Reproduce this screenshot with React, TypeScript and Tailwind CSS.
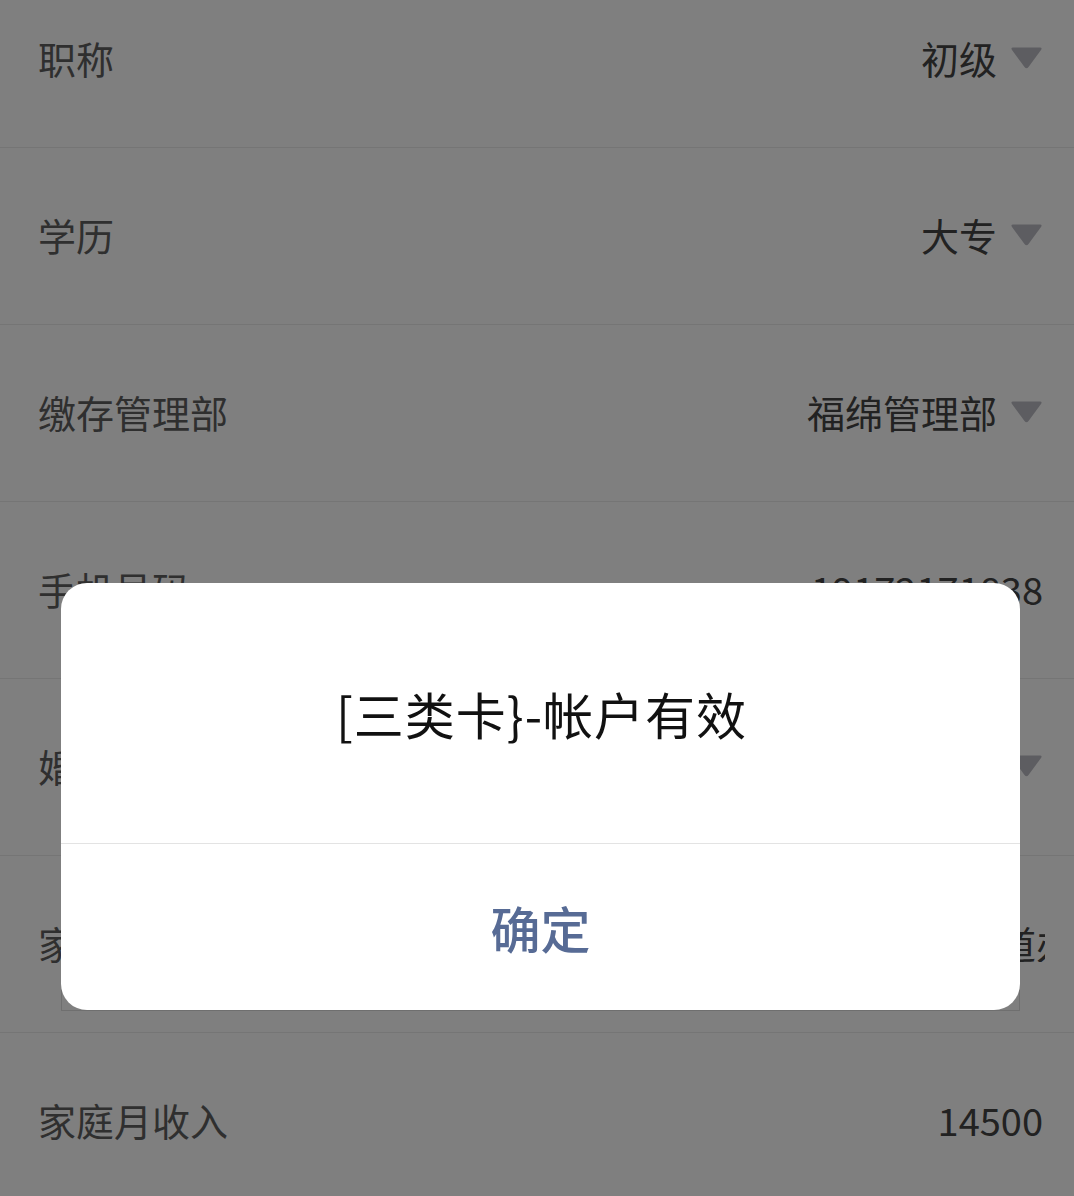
import React from "react";

type Row = {
  label: string;
  value: string;
  select?: boolean;
  clip?: boolean;
};

const rows: Row[] = [
  { label: "职称", value: "初级", select: true },
  { label: "学历", value: "大专", select: true },
  { label: "缴存管理部", value: "福绵管理部", select: true },
  { label: "手机号码", value: "19172171838" },
  { label: "婚姻状况", value: "已婚", select: true },
  { label: "家庭住址", value: "湖北省武汉市洪山区珞喻路街道办事处", clip: true },
  { label: "家庭月收入", value: "14500" },
];

const dialogTitle = "[三类卡}-帐户有效";

function Caret() {
  return (
    <svg width="33" height="23" viewBox="0 0 33 23" className="shrink-0">
      <path
        d="M3 1.5 H30 Q32.5 1.5 31 4 L18.5 21 Q16.5 23.5 14.5 21 L2 4 Q0.5 1.5 3 1.5 Z"
        fill="#babac2"
      />
    </svg>
  );
}

export default function App() {
  return (
    <div
      className="relative w-[1074px] h-[1196px] overflow-hidden bg-white"
      style={{ fontFamily: '"Noto Sans CJK SC", "Noto Sans", sans-serif' }}
    >
      {/* form rows */}
      <div className="mt-[-29px] flex flex-col">
        {rows.map((r) => (
          <div
            key={r.label}
            className="h-[177px] flex items-center justify-between pl-[38px] pr-[31px] pb-[3px] border-b border-[#ebebeb]"
          >
            <span className="text-[38px] leading-none text-[#5e5e5e] whitespace-nowrap">
              {r.label}
            </span>
            {r.clip ? (
              <div className="w-[541px] mr-[-2px] overflow-hidden whitespace-nowrap text-[38px] leading-none text-[#444444]">
                {r.value}
              </div>
            ) : (
              <div className="flex items-center gap-[13px]">
                <span className="text-[38px] leading-none text-[#444444] whitespace-nowrap">
                  {r.value}
                </span>
                {r.select && <Caret />}
              </div>
            )}
          </div>
        ))}
      </div>

      {/* mask */}
      <div className="absolute inset-0 bg-black/50" />

      {/* dialog */}
      <div className="absolute left-[61px] top-[843px] w-[959px] h-[168px] border border-[#6f6f6f]" />
      <div className="absolute left-[61px] top-[583px] w-[959px] h-[427px] bg-white rounded-[26px] flex flex-col overflow-hidden">
        <div className="h-[260px] flex items-center justify-center">
          <span className="text-[50px] leading-none tracking-[1px] text-[#111111] pl-[2px]">
            {dialogTitle}
          </span>
        </div>
        <div className="h-px bg-[#e3e3e3]" />
        <div className="flex-1 flex items-center justify-center">
          <span className="text-[50px] leading-none font-medium text-[#576b95]">
            确定
          </span>
        </div>
      </div>
    </div>
  );
}
